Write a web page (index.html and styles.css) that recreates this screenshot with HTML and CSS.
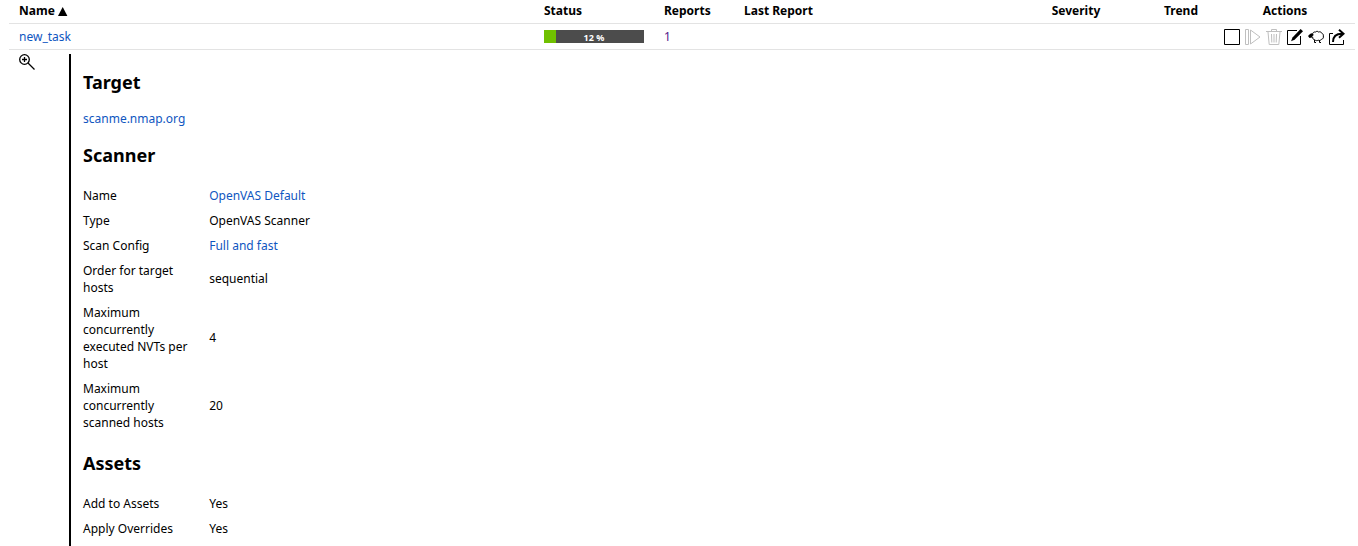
FILE: index.html
```html
<!DOCTYPE html>
<html lang="en">
<head>
<meta charset="utf-8">
<title>Tasks</title>
<link rel="stylesheet" href="styles.css">
</head>
<body>
<main class="tasks">
  <div class="row header">
    <span>Name <svg class="sort" width="10" height="9" viewBox="0 0 10 9"><path d="M4.700 0L9.400 9H0z"/></svg></span>
    <span>Status</span>
    <span>Reports</span>
    <span>Last Report</span>
    <span class="center">Severity</span>
    <span class="center">Trend</span>
    <span class="center">Actions</span>
  </div>
  <div class="row task">
    <a class="link" href="#">new_task</a>
    <div class="progress"><span>12 %</span></div>
    <a class="visited" href="#">1</a>
    <span></span>
    <span></span>
    <span></span>
    <div class="actions">
      <svg width="16" height="16" viewBox="0 0 16 16"><path class="line" d="M.5 .5h15v15H.5z"/></svg>
      <svg class="off" width="16" height="16" viewBox="0 0 16 16"><path class="line" d="M.5 .5h3v15h-3zM5.500 1v14L15 8z"/></svg>
      <svg class="off" width="16" height="16" viewBox="0 0 16 16"><path class="line" d="M0 2.500h16M5.500 2V.5h5V2M2 3l1.200 12.500h9.600L14 3M5.500 5l.3 8.500M8 5v8.500M10.500 5l-.3 8.500"/></svg>
      <svg width="16" height="16" viewBox="0 0 16 16"><path class="line" d="M10 1.500H.5v14h13V7"/><path d="M13.600 0L16 2.200 7.600 10.700 4 12.300l1.500-3.800z"/></svg>
      <svg width="16" height="16" viewBox="0 0 16 16"><path class="line" d="M4.500 5.500C4.500 3.500 6 2.800 7.500 3c1-.9 2.200-.9 3 0 1.500-.5 2.800 0 3.200 1.200 1.300.5 1.900 1.600 1.600 2.800.5 1.600-.3 3-1.800 3.300-.8 1.300-2.300 1.500-3.300.9-1.200.7-2.700.5-3.400-.4C5.300 10.800 4.500 9.500 4.700 8M6.500 11v2.500h1.500M11.500 11.500v2h1.500"/><path d="M0 7l2-2 1.500-.8L5 5l.8 1-1 .7L4 8.600 1.500 9z"/></svg>
      <svg width="16" height="16" viewBox="0 0 16 16"><path class="line" d="M4 4.500H.5v11h14V11"/><path class="arrow" d="M4 13C4 8 6 4.800 13 4.800M10 .8l4.500 4L10 8.800"/></svg>
    </div>
  </div>
  <div class="details">
    <svg class="magnifier" width="16" height="16" viewBox="0 0 16 16"><circle class="ring" cx="5.500" cy="5.500" r="4.800"/><path class="ring" d="M3 5.500h5M5.500 3v5M9 9l6.500 6.500"/></svg>
    <section class="panel">
      <h2>Target</h2>
      <p><a class="link" href="#">scanme.nmap.org</a></p>
      <h2>Scanner</h2>
      <dl>
        <dt>Name</dt><dd><a class="link" href="#">OpenVAS Default</a></dd>
        <dt>Type</dt><dd>OpenVAS Scanner</dd>
        <dt>Scan Config</dt><dd><a class="link" href="#">Full and fast</a></dd>
        <dt>Order for target hosts</dt><dd>sequential</dd>
        <dt>Maximum concurrently executed NVTs per host</dt><dd>4</dd>
        <dt>Maximum concurrently scanned hosts</dt><dd>20</dd>
      </dl>
      <h2>Assets</h2>
      <dl>
        <dt>Add to Assets</dt><dd>Yes</dd>
        <dt>Apply Overrides</dt><dd>Yes</dd>
      </dl>
    </section>
  </div>
</main>
</body>
</html>
```
FILE: styles.css
```css
* { box-sizing: border-box; }
body {
  margin: 0;
  height: 546px;
  overflow: hidden;
  background: #fff;
  color: #000;
  font: 12px/17px "Noto Sans", sans-serif;
}
a { text-decoration: none; }
.link { color: #0f56bf; }
.visited { color: #551a8b; }
.tasks { margin: 0 3px 0 9px; }
.row {
  display: grid;
  grid-template-columns: 525px 120px 80px 261px 142px 68px 1fr;
  align-items: center;
  height: 26px;
  padding-left: 10px;
  border-bottom: 1px solid #e3e3e3;
}
.header {
  height: 24px;
  padding-bottom: 2px;
  font-weight: bold;
}
.sort { vertical-align: -1px; }
.center { text-align: center; }
.progress {
  width: 100px;
  height: 13px;
  background: linear-gradient(to right, #70c000 12%, #4c4c4c 12%);
  color: #fff;
  font-size: 9px;
  font-weight: bold;
  line-height: 15px;
  text-align: center;
}
.actions {
  display: flex;
  gap: 5px;
  justify-content: flex-end;
  padding-right: 10px;
}
.line { fill: none; stroke: #000; }
.off .line { stroke: #bfbfbf; }
.arrow { fill: none; stroke: #000; stroke-width: 2; }
.ring { fill: none; stroke: #000; stroke-width: 1.3; }
.details { display: flex; padding: 4px 0 0 10px; }
.magnifier { flex: none; }
.panel {
  margin-left: 34px;
  padding: 16px 0 0 12px;
  min-height: 496px;
  border-left: 2px solid #000;
}
h2 { margin: 0 0 15px; font-size: 18px; line-height: 25px; }
p { margin: 0 0 16px; }
dl {
  display: grid;
  grid-template-columns: 108px auto;
  column-gap: 18.2px;
  align-items: center;
  margin: 0 0 16px;
}
dt, dd { margin: 0; padding: 4px 0; }
dd { padding: 3.8px 0 4.2px; }
```
